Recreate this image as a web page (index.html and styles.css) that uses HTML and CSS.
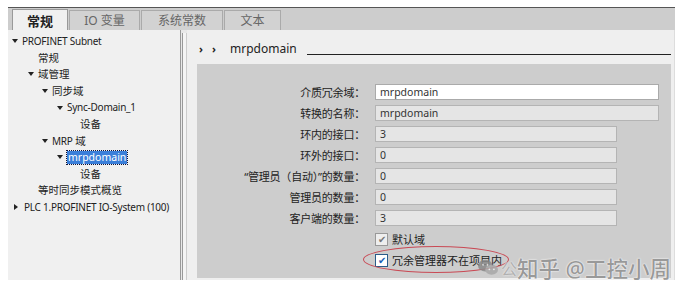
FILE: index.html
```html
<!DOCTYPE html>
<html lang="zh">
<head>
<meta charset="utf-8">
<link rel="stylesheet" href="styles.css">
</head>
<body>
<div class="app">
  <div class="tabs">
    <div class="tab active">常规</div>
    <div class="tab t2">IO 变量</div>
    <div class="tab t3">系统常数</div>
    <div class="tab t4">文本</div>
  </div>
  <div class="main">
    <div class="tree">
      <div class="node l0"><span class="tri down"></span><span class="lat">PROFINET Subnet</span></div>
      <div class="node l1">常规</div>
      <div class="node l1b"><span class="tri down"></span>域管理</div>
      <div class="node l2"><span class="tri down"></span>同步域</div>
      <div class="node l3"><span class="tri down"></span><span class="lat">Sync-Domain_1</span></div>
      <div class="node l4">设备</div>
      <div class="node l2"><span class="tri down"></span><span class="lat">MRP</span>&nbsp;域</div>
      <div class="node l3"><span class="tri down"></span><span class="sel">mrpdomain</span></div>
      <div class="node l4">设备</div>
      <div class="node l1">等时同步模式概览</div>
      <div class="node l0"><span class="tri right"></span><span class="lat">PLC 1.PROFINET IO-System (100)</span></div>
    </div>
    <div class="splitter"><div class="grip"></div></div>
    <div class="content">
      <div class="head">
        <span class="chev">&#x203A;</span><span class="chev">&#x203A;</span>
        <span class="title">mrpdomain</span>
        <span class="rule"></span>
      </div>
      <div class="box">
        <div class="form">
          <div class="lbl">介质冗余域：</div><div class="inp white wide">mrpdomain</div>
          <div class="lbl">转换的名称：</div><div class="inp wide">mrpdomain</div>
          <div class="lbl">环内的接口：</div><div class="inp">3</div>
          <div class="lbl">环外的接口：</div><div class="inp">0</div>
          <div class="lbl">“管理员（自动）”的数量：</div><div class="inp">0</div>
          <div class="lbl">管理员的数量：</div><div class="inp">0</div>
          <div class="lbl">客户端的数量：</div><div class="inp">3</div>
          <div></div><div class="chk"><span class="cb dis">&#x2714;</span>默认域</div>
          <div></div><div class="chk"><span class="cb on">&#x2714;</span>冗余管理器不在项目内</div>
        </div>
        <div class="ring"></div>
        <div class="wm">
          <svg class="wx" width="20" height="17" viewBox="0 0 22 18"><ellipse cx="8" cy="7" rx="8" ry="6.5" fill="#8a8a8a"/><ellipse cx="15" cy="11.5" rx="7" ry="5.5" fill="#a8a8a8"/><circle cx="12.5" cy="11" r="1" fill="#eee"/><circle cx="17.5" cy="11" r="1" fill="#eee"/><circle cx="5.5" cy="6" r="1" fill="#eee"/><circle cx="10.5" cy="6" r="1" fill="#eee"/></svg>
          <span class="wsmall">公</span><span class="wbig">知乎 @工控小周</span>
        </div>
      </div>
    </div>
  </div>
</div>
</body>
</html>
```
FILE: styles.css
```css
html, body { margin: 0; padding: 0; background: #fff; }
body { font-family: "Noto Sans", "Noto Sans CJK SC", sans-serif; font-size: 11px; color: #222; }
.app { margin: 7px 0 0 8px; width: 667px; border-top: 1px solid #555; }
.tabs { height: 22px; background: #cdcdcd; display: flex; align-items: flex-end; padding-left: 4px; }
.tab { height: 20px; box-sizing: border-box; border: 1px solid #aaa; border-bottom: none; color: #666; font-size: 12px; line-height: 19px; text-align: center; margin-right: 1px; background: #d2d2d2; }
.tab.active { height: 22px; width: 56px; background: #f0f0f0; color: #222; font-weight: bold; font-size: 13px; border-color: #999; margin-bottom: -1px; line-height: 22px; }
.t2 { width: 71px; }
.t3 { width: 82px; }
.t4 { width: 57px; }
.main { display: flex; height: 250px; }
.tree { width: 173px; background: #f0f0f0; padding-top: 3px; box-sizing: border-box; border-right: 1px solid #999; overflow: hidden; }
.node { height: 16.6px; line-height: 16.6px; white-space: nowrap; display: flex; align-items: center; font-size: 10.5px; }
.lat { font-size: 10px; letter-spacing: -0.25px; }
.l0 { padding-left: 4px; }
.l1 { padding-left: 30px; }
.l1b { padding-left: 20px; }
.l2 { padding-left: 34px; }
.l3 { padding-left: 49px; }
.l4 { padding-left: 72px; }
.tri { display: inline-block; width: 0; height: 0; margin-right: 4px; }
.tri.down { border-left: 3.5px solid transparent; border-right: 3.5px solid transparent; border-top: 4px solid #222; }
.tri.right { border-top: 3.5px solid transparent; border-bottom: 3.5px solid transparent; border-left: 4px solid #222; margin-left: 2px; margin-right: 6px; }
.sel { background: #3b7fd9; color: #fff; outline: 1px dotted #113; padding: 0 1px; line-height: 13px; font-size: 10.5px; }
.splitter { width: 6px; background: #e8e8e8; display: flex; justify-content: center; padding-top: 3px; box-sizing: border-box; }
.grip { width: 3px; border-left: 1px solid #999; border-right: 1px solid #ccc; background: #f4f4f4; }
.content { flex: 1; background: #efefef; padding: 0 3px 0 10px; border-right: 1px solid #ddd; display: flex; flex-direction: column; }
.head { height: 34px; display: flex; align-items: center; padding-top: 2px; box-sizing: border-box; }
.chev { font-weight: bold; font-size: 11px; margin: 0 9px 0 2px; color: #222; }
.chev + .chev { margin-left: 0; margin-right: 14px; }
.title { font-size: 12px; color: #222; }
.rule { flex: 1; border-bottom: 1px solid #222; margin-left: 10px; align-self: center; margin-top: 12px; }
.box { flex: 1; background: #cdcdcd; position: relative; padding-top: 20px; margin-bottom: 2px; }
.form { display: grid; grid-template-columns: 168px auto; column-gap: 10px; row-gap: 5px; align-items: center; }
.lbl { text-align: right; font-size: 11px; color: #222; white-space: nowrap; letter-spacing: -0.2px; }
.inp { width: 242px; height: 16px; box-sizing: border-box; border: 1px solid #b4b4b4; background: #e5e5e5; font-size: 10.5px; line-height: 14px; padding-left: 4px; color: #333; }
.inp.wide { width: 284px; }
.inp.white { background: #fff; border-color: #aaa; }
.chk { display: flex; align-items: center; height: 16px; font-size: 11px; }
.cb { width: 11px; height: 11px; border: 1px solid #888; background: #fff; display: inline-flex; align-items: center; justify-content: center; font-size: 10px; line-height: 1; margin-right: 4px; }
.cb.dis { color: #777; background: #eee; border-color: #999; }
.cb.on { color: #1a5fb4; border-color: #2b5c8a; }
.ring { position: absolute; left: 166px; top: 182px; width: 144px; height: 25px; border: 1.5px solid #c94a55; border-radius: 50%; }
.wm { position: absolute; left: 281px; top: 188px; display: flex; align-items: center; white-space: nowrap; }
.wx { margin-right: 3px; opacity: 0.85; }
.wsmall { font-size: 16px; color: #b0b0b0; margin-right: 0; text-shadow: 0 0 2px #fff; }
.wbig { font-size: 21.5px; font-weight: 500; color: #999; text-shadow: 0 0 1px #fff, 0 0 2px #fff; letter-spacing: 0; }
```
